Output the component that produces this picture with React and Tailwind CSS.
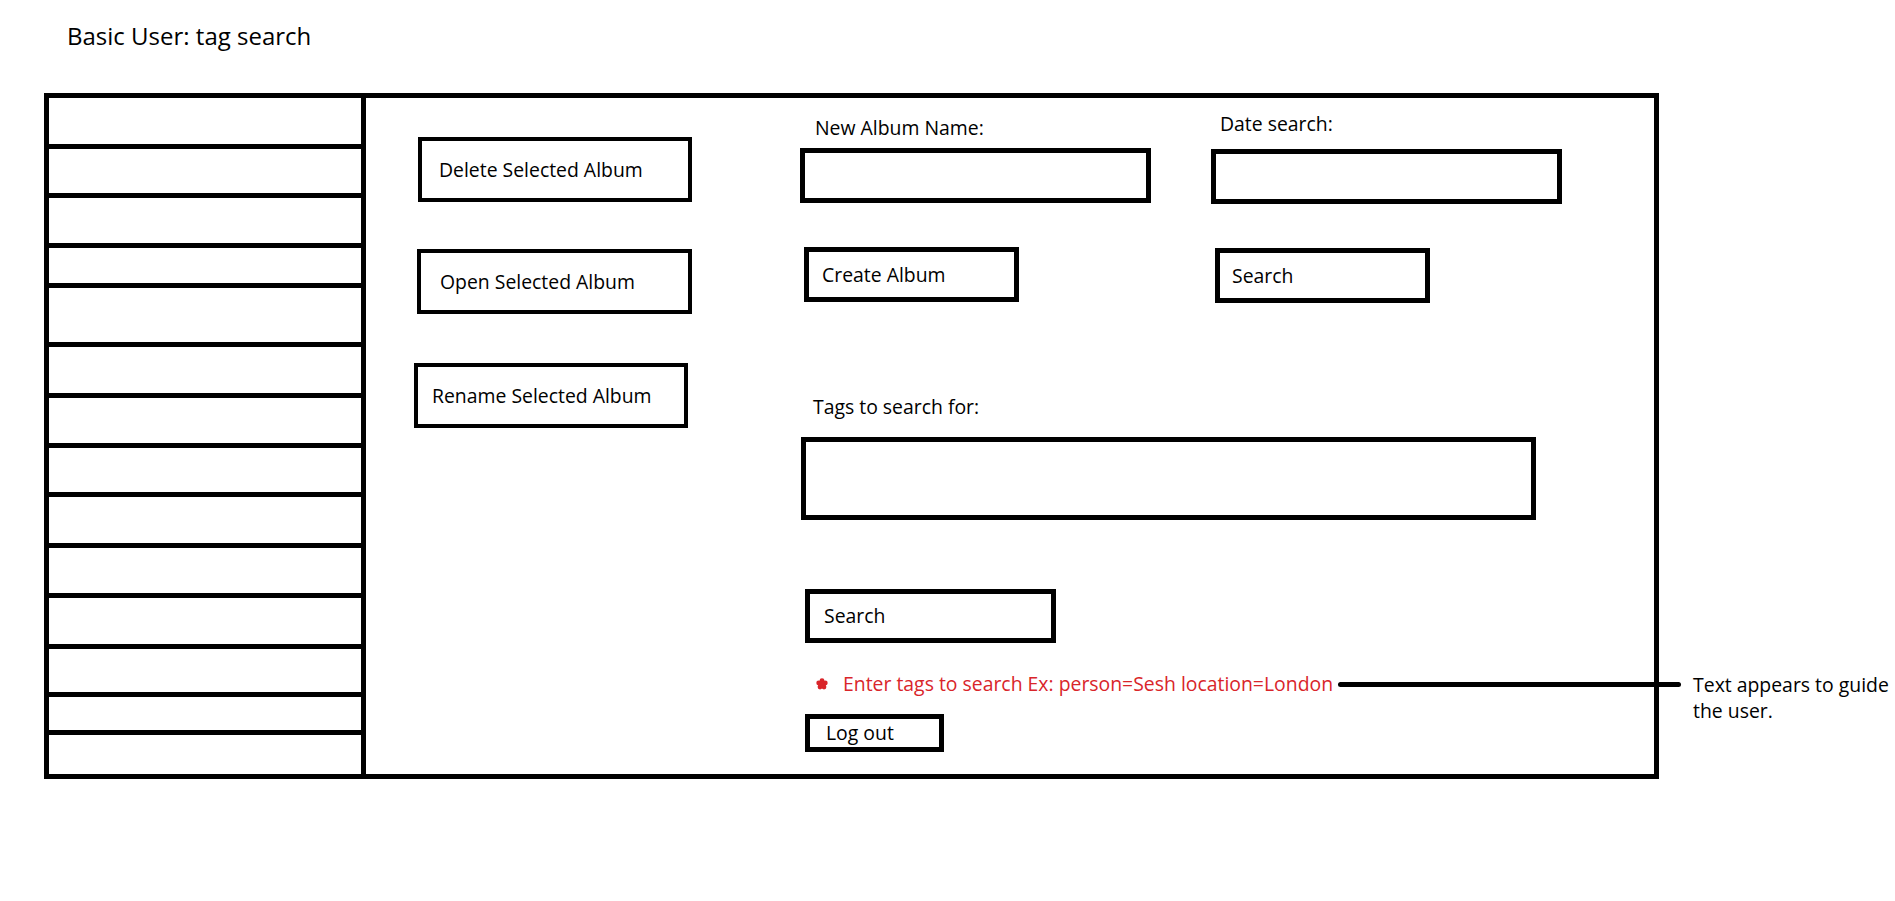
import React from "react";

const rows = [51, 49, 50, 40, 59, 51, 50, 49, 51, 50, 51, 48, 38];

const Box = ({ className = "", children }) => (
  <div className={`flex items-center border-black bg-white ${className}`}>{children}</div>
);

const Flower = () => (
  <svg width="12" height="12" viewBox="0 0 12 12" className="shrink-0">
    <g fill="#d9252a">
      <circle cx="6" cy="2.6" r="2.4" />
      <circle cx="9.3" cy="5" r="2.4" />
      <circle cx="8" cy="9" r="2.4" />
      <circle cx="4" cy="9" r="2.4" />
      <circle cx="2.7" cy="5" r="2.4" />
      <circle cx="6" cy="6.3" r="3" />
    </g>
  </svg>
);

export default function App() {
  return (
    <div className="relative h-[901px] w-[1895px] overflow-hidden bg-white pt-[21px] text-black font-['Open_Sans',_'Liberation_Sans',_sans-serif]">
      {/* Title */}
      <h1 className="ml-[67px] h-[30px] text-[24px] leading-[30px]">Basic User: tag search</h1>

      {/* Window frame */}
      <div className="mt-[42px] ml-[44px] flex h-[686px] w-[1615px] border-[5px] border-black">
        {/* Album list */}
        <div className="flex w-[317px] shrink-0 flex-col border-r-[5px] border-black">
          {rows.map((h, i) => (
            <div key={i} className="border-b-[5px] border-black" style={{ height: h }} />
          ))}
          <div className="flex-1" />
        </div>

        {/* Main area */}
        <div className="flex flex-1 text-[19.4px] leading-[22px]">
          {/* Album actions */}
          <div className="flex w-[326px] shrink-0 flex-col items-start">
            <Box className="mt-[39px] ml-[52px] h-[65px] w-[274px] border-4 pl-[17px]">Delete Selected Album</Box>
            <Box className="mt-[47px] ml-[51px] h-[65px] w-[275px] border-4 pl-[19px]">Open Selected Album</Box>
            <Box className="mt-[49px] ml-[48px] h-[65px] w-[274px] border-4 pl-[14px]">Rename Selected Album</Box>
          </div>

          {/* Create / search */}
          <div className="ml-[108px] flex flex-col items-start">
            <div className="flex items-start gap-[60px]">
              <div className="flex w-[351px] flex-col items-start">
                <label className="mt-[19px] ml-[15px] h-[22px]">New Album Name:</label>
                <div className="mt-[9px] h-[55px] w-[351px] border-[5px] border-black" />
                <Box className="mt-[44px] ml-[4px] h-[55px] w-[215px] border-[5px] pl-[13px]">Create Album</Box>
              </div>
              <div className="flex w-[351px] flex-col items-start">
                <label className="mt-[15px] ml-[9px] h-[22px]">Date search:</label>
                <div className="mt-[14px] h-[55px] w-[351px] border-[5px] border-black" />
                <Box className="mt-[44px] ml-[4px] h-[55px] w-[215px] border-[5px] pl-[12px]">Search</Box>
              </div>
            </div>

            <label className="mt-[93px] ml-[13px] h-[22px]">Tags to search for:</label>
            <div className="mt-[19px] ml-[1px] h-[83px] w-[735px] border-[5px] border-black" />
            <Box className="mt-[69px] ml-[5px] h-[54px] w-[251px] border-[5px] pl-[14px]">Search</Box>

            {/* Hint row with callout */}
            <div className="mt-[29px] ml-[16px] flex h-[24px] items-center">
              <Flower />
              <span className="ml-[15px] whitespace-nowrap text-[19.4px] text-[#d9252a]">
                Enter tags to search Ex: person=Sesh location=London
              </span>
              <div className="ml-[5px] h-[5px] w-[343px] shrink-0 rounded-full bg-black" />
              <p className="ml-[12px] w-[210px] shrink-0 self-start whitespace-nowrap text-[19.4px] leading-[26px]">
                Text appears to guide
                <br />
                the user.
              </p>
            </div>

            <Box className="mt-[18px] ml-[5px] h-[38px] w-[139px] border-[5px] pl-[16px]">Log out</Box>
          </div>
        </div>
      </div>
    </div>
  );
}
